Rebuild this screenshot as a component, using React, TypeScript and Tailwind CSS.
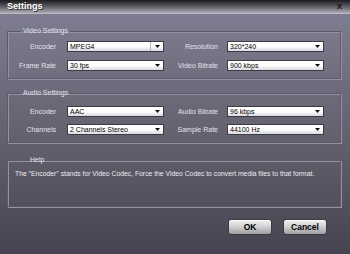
import React from "react";

function Select({ value, button = false }: { value: string; button?: boolean }) {
  return (
    <div className="relative flex h-[11px] items-center border border-[#3b3b44] bg-gradient-to-b from-white via-white to-[#d9d9de] pl-[2px] text-[7px] leading-none text-black">
      <span className="flex-1">{value}</span>
      {button && <div className="h-full w-[1px] bg-[#b4b4ba]" />}
      <div className="flex w-[12px] items-center justify-center">
        <svg width="5" height="3" viewBox="0 0 5 3">
          <path d="M0 0 L5 0 L2.5 3 Z" fill="#111" />
        </svg>
      </div>
    </div>
  );
}

function Row({
  l1,
  v1,
  l2,
  v2,
  btn,
}: {
  l1: string;
  v1: string;
  l2: string;
  v2: string;
  btn?: boolean;
}) {
  return (
    <div className="flex items-center">
      <div className="w-[48px] text-right text-[7px] leading-none text-[#e2e1ec]">{l1}</div>
      <div className="ml-[11px] w-[97px]">
        <Select value={v1} button={btn} />
      </div>
      <div className="w-[54px] text-right text-[7px] leading-none text-[#e2e1ec]">{l2}</div>
      <div className="ml-[9px] w-[97px]">
        <Select value={v2} />
      </div>
    </div>
  );
}

function Group({
  title,
  className,
  children,
}: {
  title: string;
  className?: string;
  children: React.ReactNode;
}) {
  return (
    <fieldset
      className={`border border-[#5b5a6b] shadow-[inset_1px_1px_0_#9391a4,1px_1px_0_#9391a4] ${className ?? ""}`}
    >
      <legend className="ml-[13px] px-[2px] text-[7px] leading-[8px] text-[#e4e3ec]">{title}</legend>
      {children}
    </fieldset>
  );
}

export default function App() {
  return (
    <div
      className="flex h-[254px] w-[350px] flex-col overflow-hidden bg-[#45444f]"
      style={{ fontFamily: '"Liberation Sans", Arial, sans-serif' }}
    >
      {/* title bar */}
      <div className="flex h-[14px] items-center justify-between border-b border-[#b9b8c2] bg-gradient-to-b from-[#1b1b1f] via-[#5d5c63] to-[#aeadb6] pl-[7px] pr-[8px]">
        <span className="text-[9px] font-bold leading-none text-white [text-shadow:1px_1px_0_#333]">
          Settings
        </span>
        <span className="text-[8px] font-bold leading-none text-[#111]">X</span>
      </div>

      {/* body */}
      <div className="flex flex-1 flex-col bg-gradient-to-b from-[#7e7c90] via-[#64626f] to-[#454450] pl-[7px] pr-[9px]">
        <Group title="Video Settings" className="mt-[13px] pb-[7px] pt-[6px]">
          <div className="flex flex-col gap-[8px]">
            <Row l1="Encoder" v1="MPEG4" l2="Resolution" v2="320*240" btn />
            <Row l1="Frame Rate" v1="30 fps" l2="Video Bitrate" v2="900 kbps" />
          </div>
        </Group>

        <Group title="Audio Settings" className="mt-[10px] pb-[7px] pt-[9px]">
          <div className="flex flex-col gap-[7px]">
            <Row l1="Encoder" v1="AAC" l2="Audio Bitrate" v2="96 kbps" />
            <Row l1="Channels" v1="2 Channels Stereo" l2="Sample Rate" v2="44100 Hz" />
          </div>
        </Group>

        <Group title="Help" className="mt-[13px] h-[51px] pl-[7px] pt-[6px]">
          <p className="whitespace-nowrap text-[6.8px] leading-[8px] text-[#ebeaf2]">
            The "Encoder" stands for Video Codec, Force the Video Codec to convert media files to that format.
          </p>
        </Group>

        <div className="mr-[14px] mt-[12px] flex justify-end gap-[11px]">
          <button className="h-[16px] w-[44px] rounded-[3px] border border-[#3a3a40] bg-gradient-to-b from-[#f2f2f2] via-[#cfcfd2] to-[#9d9da2] text-[8.5px] font-bold leading-none text-black shadow-[inset_0_1px_0_#fff]">
            OK
          </button>
          <button className="h-[16px] w-[44px] rounded-[3px] border border-[#3a3a40] bg-gradient-to-b from-[#f2f2f2] via-[#cfcfd2] to-[#9d9da2] text-[8.5px] font-bold leading-none text-black shadow-[inset_0_1px_0_#fff]">
            Cancel
          </button>
        </div>
      </div>
    </div>
  );
}
